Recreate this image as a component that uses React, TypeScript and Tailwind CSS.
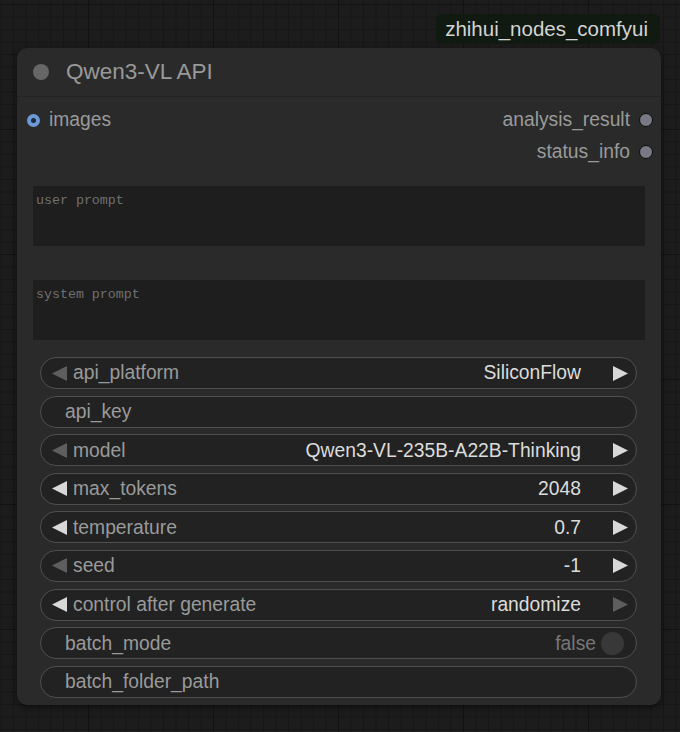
import React from "react"

type Widget = {
  label: string
  value?: string
  left?: "on" | "off"
  right?: "on" | "off"
  toggle?: boolean
}

const widgets: Widget[] = [
  { label: "api_platform", value: "SiliconFlow", left: "off", right: "on" },
  { label: "api_key" },
  { label: "model", value: "Qwen3-VL-235B-A22B-Thinking", left: "off", right: "on" },
  { label: "max_tokens", value: "2048", left: "on", right: "on" },
  { label: "temperature", value: "0.7", left: "on", right: "on" },
  { label: "seed", value: "-1", left: "off", right: "on" },
  { label: "control after generate", value: "randomize", left: "on", right: "off" },
  { label: "batch_mode", toggle: true },
  { label: "batch_folder_path" },
]

function Arrow({ dir, on }: { dir: "left" | "right"; on: boolean }) {
  const pts = dir === "left" ? "15,0 15,15 0,7.5" : "0,0 0,15 15,7.5"
  return (
    <svg width="15" height="15" viewBox="0 0 15 15" className="shrink-0">
      <polygon points={pts} fill={on ? "#d8d8d8" : "#5e5e5e"} />
    </svg>
  )
}

function WidgetRow({ w }: { w: Widget }) {
  const hasArrows = !!w.left
  return (
    <div className="h-[32px] flex items-center rounded-full border border-[#4f4f4f] bg-[#222222] text-[19.3px] leading-none">
      {hasArrows ? (
        <>
          <div className="pl-[11px] pr-[6px] flex items-center">
            <Arrow dir="left" on={w.left === "on"} />
          </div>
          <span className="text-[#9a9a9a]">{w.label}</span>
          <span className="ml-auto text-[#dcdcdc]">{w.value}</span>
          <div className="pl-[32px] pr-[8px] flex items-center">
            <Arrow dir="right" on={w.right === "on"} />
          </div>
        </>
      ) : (
        <>
          <span className="pl-[24px] text-[#9a9a9a]">{w.label}</span>
          {w.toggle && (
            <div className="ml-auto flex items-center gap-[5px] pr-[12px]">
              <span className="text-[#777777]">false</span>
              <div className="size-[23px] rounded-full bg-[#383838]" />
            </div>
          )}
        </>
      )}
    </div>
  )
}

function Prompt({ text }: { text: string }) {
  return (
    <div className="mx-[16px] h-[60px] bg-[#1e1e1e] pl-[3px] pt-[1px]">
      <span className="font-['Liberation_Mono',monospace] text-[13.3px] leading-[16px] text-[#707070]">
        {text}
      </span>
    </div>
  )
}

export default function App() {
  return (
    <div className="w-[680px] h-[732px] overflow-hidden pt-[14px] pl-[17px] bg-[#1c1c1c] bg-[linear-gradient(to_right,#121212_1px,transparent_1px),linear-gradient(to_bottom,#121212_1px,transparent_1px),linear-gradient(to_right,#161616_1px,transparent_1px),linear-gradient(to_bottom,#161616_1px,transparent_1px)] bg-[size:125px_125px,125px_125px,12.5px_12.5px,12.5px_12.5px] bg-[position:88px_4px,88px_4px,0.5px_4px,0.5px_4px] font-['Liberation_Sans',Arial,sans-serif]">
      <div className="w-[644px] flex justify-end">
        <div className="mr-[1px] h-[30px] pl-[9px] pr-[12px] flex items-center rounded-[6px] bg-[#101a10] text-[20.5px] text-[#d4d4d4]">
          zhihui_nodes_comfyui
        </div>
      </div>
      <div className="mt-[4px] w-[644px] h-[657px] rounded-[10px] bg-[#2a2a2a] shadow-[0_2px_6px_rgba(0,0,0,0.5)] flex flex-col">
        <div className="h-[49px] shrink-0 flex items-center border-b border-[#232323] pl-[16px]">
          <div className="size-[16px] rounded-full bg-[#666666]" />
          <span className="ml-[17px] text-[22.5px] text-[#999999]">Qwen3-VL API</span>
        </div>
        <div className="pt-[7px] flex flex-col">
          <div className="h-[32px] flex items-center text-[19.3px]">
            <div className="ml-[10px] size-[13px] rounded-full bg-[#6a9ad8] flex items-center justify-center">
              <div className="size-[5px] rounded-full bg-[#1f2a3a]" />
            </div>
            <span className="ml-[9px] text-[#9a9a9a]">images</span>
            <span className="ml-auto text-[#9a9a9a]">analysis_result</span>
            <div className="ml-[9px] mr-[8px] size-[14px] rounded-full bg-[#787886] border-[1.5px] border-[#0c0c0c]" />
          </div>
          <div className="h-[32px] flex items-center justify-end text-[19.3px]">
            <span className="text-[#9a9a9a]">status_info</span>
            <div className="ml-[9px] mr-[8px] size-[14px] rounded-full bg-[#787886] border-[1.5px] border-[#0c0c0c]" />
          </div>
        </div>
        <div className="mt-[18px]">
          <Prompt text="user prompt" />
        </div>
        <div className="mt-[34px]">
          <Prompt text="system prompt" />
        </div>
        <div className="mt-[17px] pl-[23px] pr-[24px] flex flex-col gap-[6.6px]">
          {widgets.map((w) => (
            <WidgetRow key={w.label} w={w} />
          ))}
        </div>
      </div>
    </div>
  )
}
